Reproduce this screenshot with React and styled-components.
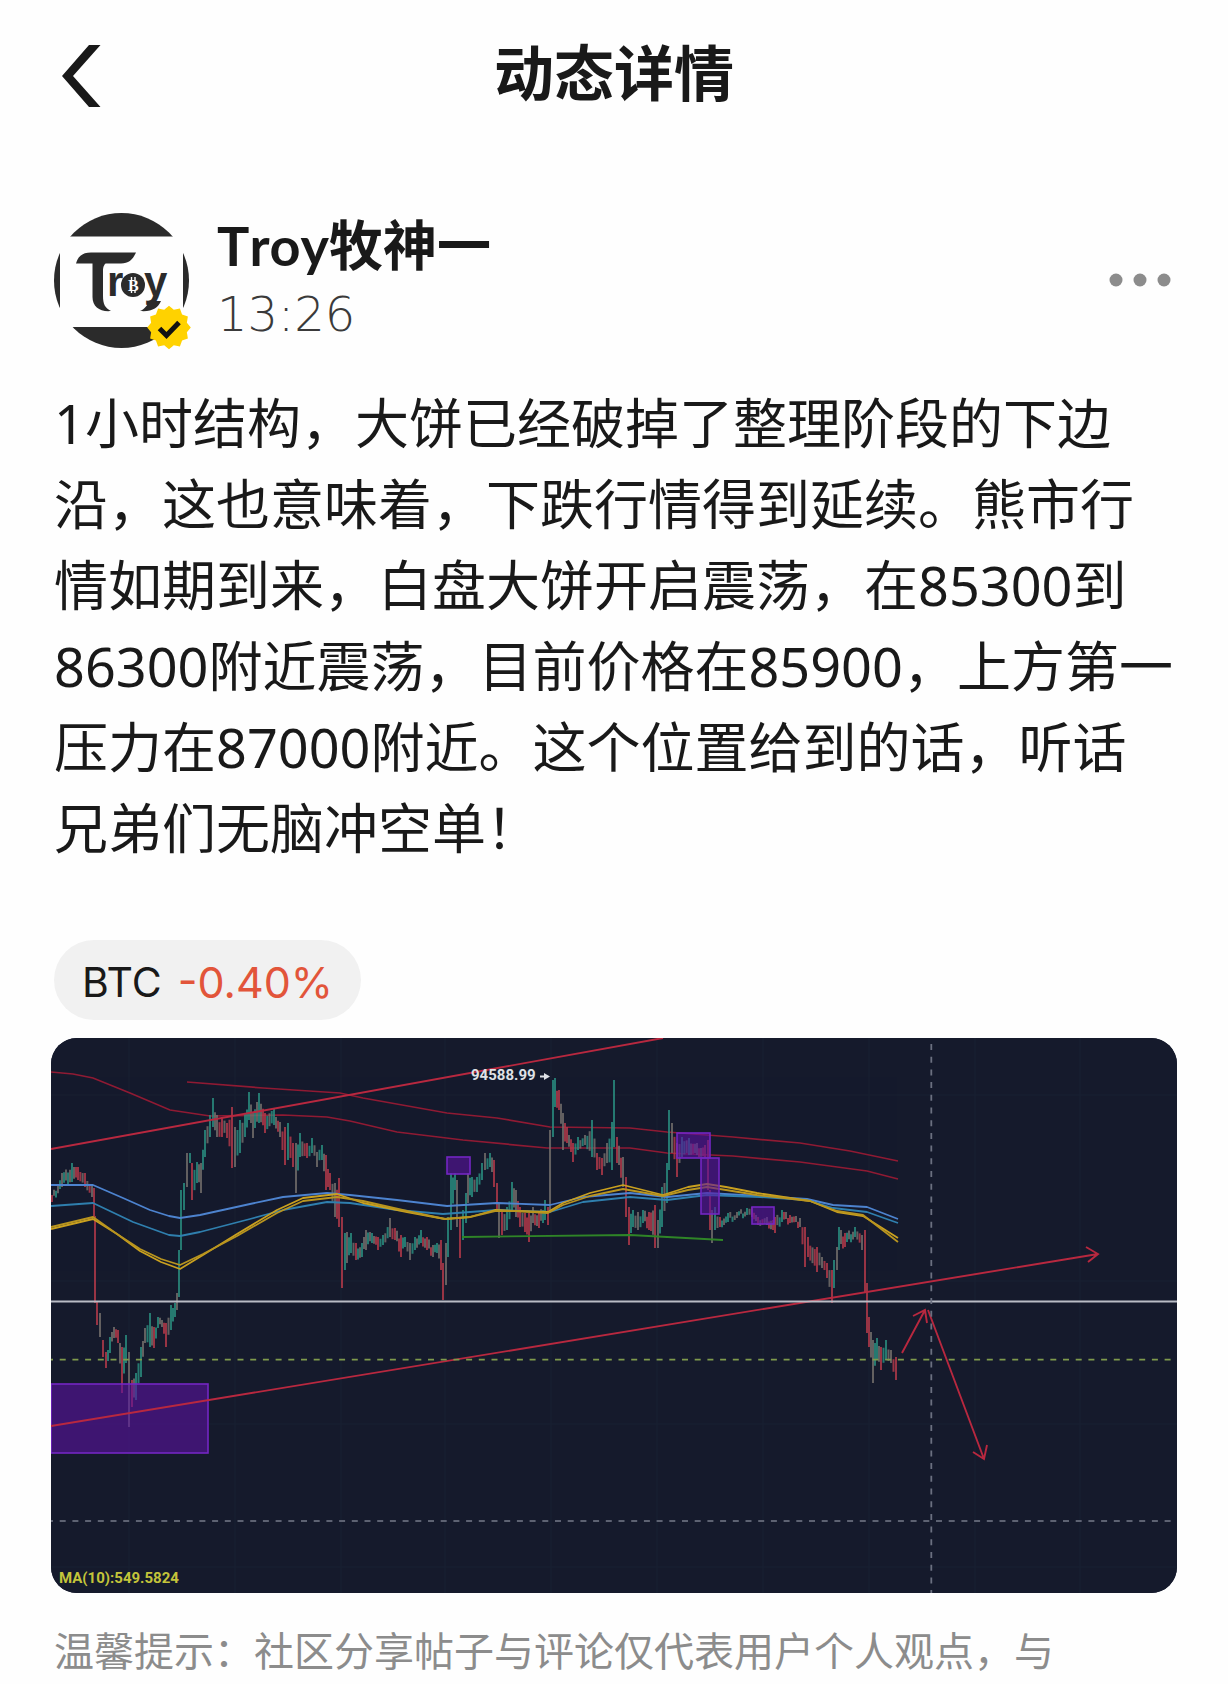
import React from "react";
import styled, { createGlobalStyle } from "styled-components";

const GlobalStyle = createGlobalStyle`
  * { box-sizing: border-box; }
  body {
    margin: 0;
    background: #fefefe;
    color: #191919;
    font-family: "Noto Sans", "Noto Sans CJK SC", sans-serif;
  }
`;

const Page = styled.div`
  display: flex;
  flex-direction: column;
`;

const Header = styled.header`
  display: grid;
  grid-template-columns: 1fr auto 1fr;
  align-items: center;
  height: 152px;
  padding: 0 54px;
`;

const Title = styled.h1`
  margin: 0;
  padding-bottom: 6px;
  font-size: 60px;
  line-height: 80px;
  font-weight: 700;
`;

const IconButton = styled.button`
  display: flex;
  align-items: center;
  justify-content: center;
  justify-self: start;
  padding: 0 ${(p) => p.$inset}px;
  border: 0;
  background: none;
  color: inherit;
  cursor: pointer;
`;

const Post = styled.main`
  display: flex;
  flex-direction: column;
  padding: 60px 54px 0;
`;

const Author = styled.section`
  display: flex;
  align-items: center;
  gap: 28px;
`;

const Avatar = styled.svg`
  flex: none;
  display: block;
  overflow: visible;
`;

const AuthorInfo = styled.div`
  flex: 1;
  display: flex;
  flex-direction: column;
  min-width: 0;
`;

const Name = styled.h2`
  margin: 0;
  font-family: Lato, "Noto Sans CJK SC", sans-serif;
  font-size: 54px;
  line-height: 68px;
  font-weight: 700;
  font-kerning: none;
`;

const Time = styled.time`
  font-family: "DejaVu Sans", sans-serif;
  font-size: 48px;
  line-height: 68px;
  font-weight: 200;
  color: #3a3a3a;
`;

const Body = styled.p`
  margin: 35px 0 0;
  font-size: 54px;
  line-height: 81px;
`;

const Ticker = styled.a`
  display: flex;
  align-items: center;
  align-self: flex-start;
  gap: 16px;
  height: 80px;
  margin-top: 71px;
  padding: 4px 28px 0;
  border-radius: 40px;
  background: #f1f1f1;
  color: #191919;
  font-family: Inter, sans-serif;
  font-size: 41px;
  line-height: 56px;
  text-decoration: none;
`;

const Change = styled.span`
  font-size: 43px;
  color: #e2553a;
`;

const Figure = styled.figure`
  margin: 18px -3px 0;
  border-radius: 26px;
  overflow: hidden;
  background: #151a2c;
`;

const ChartSvg = styled.svg`
  display: block;
  width: 100%;
  height: auto;
`;

const Tip = styled.p`
  margin: 30px 0 0;
  font-size: 40px;
  line-height: 56px;
  color: #8c8c8c;
`;

/* Each entry: x, high, low */
const PRICES = [
  [1,157,164],[11,135,149],[21,125,144],[27,129,142],[34,135,149],[41,147,159],[43,150,180],[44,178,265],
  [46,264,287],[49,275,299],[52,302,319],[55,314,330],[59,299,315],[63,289,300],[67,292,305],[71,309,355],
  [75,297,325],[78,314,389],[81,342,369],[85,335,362],[90,309,339],[94,290,305],[99,275,309],[103,289,310],
  [107,279,290],[111,282,289],[115,285,309],[120,267,292],[124,265,279],[126,255,272],[128,212,259],
  [130,152,212],[133,145,172],[136,115,149],[139,115,125],[141,125,162],[146,124,145],[150,125,155],
  [154,92,119],[159,77,99],[162,60,89],[166,77,99],[171,79,99],[176,85,100],[181,69,130],[184,89,129],
  [189,82,115],[194,75,99],[198,54,82],[202,75,100],[208,55,85],[214,75,95],[223,70,87],[229,84,99],
  [234,89,127],[237,85,122],[242,105,129],[245,105,155],[249,95,119],[256,105,120],[261,100,115],
  [266,114,129],[271,107,122],[275,117,152],[279,135,152],[284,145,179],[288,140,189],[291,179,250],
  [294,195,232],[296,194,225],[300,195,215],[305,205,222],[311,205,219],[315,192,212],[321,195,205],
  [327,199,212],[332,197,207],[339,180,199],[344,190,202],[350,197,219],[354,199,209],[359,205,222],
  [364,199,212],[370,192,205],[376,199,212],[382,207,219],[386,205,215],[390,202,232],[392,225,262],
  [395,205,247],[397,179,219],[400,135,192],[404,135,152],[406,142,189],[409,179,220],[412,172,202],
  [415,155,185],[417,135,165],[421,139,159],[426,139,154],[431,125,142],[434,115,132],[439,115,129],
  [443,122,149],[446,145,172],[448,165,200],[451,172,197],[456,169,192],[461,144,172],[465,152,179],
  [469,169,189],[474,175,194],[478,175,204],[482,169,185],[488,175,190],[494,162,182],[497,169,187],
  [499,92,175],[502,42,99],[504,40,69],[508,52,72],[512,75,112],[516,89,105],[522,105,124],[527,99,112],
  [534,97,107],[541,82,119],[546,115,132],[551,120,137],[556,105,125],[561,84,132],[563,42,109],
  [566,99,125],[572,119,149],[575,139,179],[578,169,207],[582,172,189],[587,174,192],[592,172,185],
  [598,174,192],[604,167,210],[607,182,210],[611,149,189],[616,125,165],[618,72,132],[621,85,115],
  [626,105,139],[631,99,119],[638,100,117],[646,105,117],[654,107,120],[657,102,152],[659,152,192],
  [661,172,205],[664,169,192],[669,179,189],[677,175,184],[686,174,180],[696,170,177],[701,169,179],
  [707,179,187],[716,179,187],[724,179,195],[731,172,184],[739,177,185],[749,180,189],[754,189,229],
  [757,199,219],[766,209,234],[771,219,230],[776,225,240],[781,232,265],[783,222,250],[786,209,232],
  [788,189,212],[794,195,209],[804,189,199],[811,197,212],[814,192,255],[816,245,295],[818,279,309],
  [822,302,345],[826,300,322],[830,309,332],[835,302,322],[840,312,325],[845,319,342],
];

/* Fill the space between the main bars with shorter ones */
function buildCandles(prices) {
  const out = [];
  prices.forEach((bar, i) => {
    const prev = prices[i - 1] || bar;
    const up = bar[1] + bar[2] < prev[1] + prev[2];
    const gap = bar[0] - prev[0];
    const steps = Math.max(1, Math.round(gap / 2.2));
    for (let s = 1; s < steps; s += 1) {
      const t = s / steps;
      const hi = prev[1] + (bar[1] - prev[1]) * t;
      const lo = prev[2] + (bar[2] - prev[2]) * t;
      const wave = ((i * 7 + s * 5) % 6) - 2;
      const inset = (lo - hi) * 0.15;
      out.push({ x: prev[0] + gap * t, hi: hi + inset + wave, lo: lo - inset + wave, tone: (i + s) % 2 === 0 ? "mix" : up ? "up" : "down" });
    }
    out.push({ x: bar[0], hi: bar[1], lo: bar[2], tone: i % 4 === 1 ? "mix" : up ? "up" : "down" });
  });
  return out;
}

const CANDLES = buildCandles(PRICES);
const TONES = { up: "#2a8f80", down: "#b53a4a", mix: "#75706c" };

const AVERAGES = [
  { color: "#8f1b34", points: "136,44 212,50 289,55 312,60 396,75 446,80 499,89 579,90 616,94 682,99 749,105 799,113 847,123" },
  { color: "#8f1b34", points: "0,34 22,36 42,40 79,55 119,72 159,78 232,77 276,79 299,83 346,94 412,102 496,110 579,110 616,115 682,118 749,124 816,133 847,141" },
  { color: "#4d83cf", points: "0,147 42,147 72,160 99,172 118,178 129,180 149,177 199,166 232,159 276,155 299,157 346,162 396,168 446,165 499,167 532,159 579,155 616,159 656,155 709,158 756,161 782,167 816,169 847,181" },
  { color: "#2f7fae", points: "0,168 42,165 82,184 118,197 129,198 149,194 199,181 232,172 276,164 299,165 346,172 392,176 446,172 499,174 532,164 579,159 616,162 656,157 709,159 756,162 782,170 816,174 847,185" },
  { color: "#c9a01f", points: "0,191 42,181 66,196 89,213 110,224 129,231 152,217 186,196 226,172 252,160 286,156 312,165 356,174 394,181 419,179 444,172 465,173 497,174 512,165 539,155 572,147 612,157 637,149 656,146 675,149 706,155 759,163 786,174 812,178 847,200" },
  { color: "#b8941f", points: "0,189 42,179 66,196 89,211 110,221 129,227 152,216 186,198 226,175 252,163 286,159 312,163 356,173 394,181 419,179 444,173 465,173 497,175 512,167 539,158 572,151 612,158 637,152 656,149 675,152 706,157 759,163 786,173 812,177 847,204" },
];

const ZONES = [
  [0, 346, 157, 69],
  [396, 119, 23, 17],
  [626, 95, 33, 25],
  [650, 120, 18, 56],
  [701, 169, 22, 17],
];

const GRID_X = [78, 184, 290, 394, 500, 606, 712, 818, 924, 1029];
const GRID_Y = [57, 243, 386, 529];

function Chart() {
  return (
    <ChartSvg viewBox="0 0 1126 555" role="img" aria-label="BTC">
      <rect width="1126" height="555" fill="#151a2c" />
      <g stroke="#192032">
        {GRID_X.map((x) => <line key={x} x1={x} x2={x} y1="0" y2="555" />)}
        {GRID_Y.map((y) => <line key={y} x1="0" x2="1126" y1={y} y2={y} />)}
      </g>
      <g fill="none" strokeWidth="1.7">
        {AVERAGES.slice(0, 2).map((a) => <polyline key={a.points} points={a.points} stroke={a.color} />)}
      </g>
      <g strokeWidth="2" opacity="0.82">
        {CANDLES.map((c, i) => <line key={i} x1={c.x} x2={c.x} y1={c.hi} y2={c.lo} stroke={TONES[c.tone]} />)}
      </g>
      <g fill="none" strokeWidth="1.8" strokeLinejoin="round">
        {AVERAGES.slice(2).map((a) => <polyline key={a.points} points={a.points} stroke={a.color} />)}
      </g>
      <polyline points="411,199 579,197 672,202" fill="none" stroke="#2f8527" strokeWidth="1.8" />
      <g fill="#5a12a0" fillOpacity="0.6" stroke="#7426c4" strokeWidth="1.6">
        {ZONES.map(([x, y, w, h]) => <rect key={x} x={x} y={y} width={w} height={h} />)}
      </g>
      <g fill="none" stroke="#b8283f" strokeWidth="1.9">
        <path d="M0 111 612 0" />
        <path d="M0 388 1047 216M1035 209 1047 216 1037 224" />
        <path d="M851 315 874 272M862 278 874 272 876 285" />
        <path d="M877 272 933 421M922 414 933 421 936 407" />
      </g>
      <line x1="0" x2="1126" y1="263.5" y2="263.5" stroke="#b9bcc5" strokeWidth="1.8" />
      <line x1="-4" x2="1126" y1="321.7" y2="321.7" stroke="#7f9a4c" strokeWidth="1.7" strokeDasharray="6 6.7" />
      <line x1="-4" x2="1126" y1="483" y2="483" stroke="#5d6272" strokeWidth="1.8" strokeDasharray="6 6.7" />
      <line x1="880.3" x2="880.3" y1="6" y2="555" stroke="#6b7080" strokeWidth="1.8" strokeDasharray="6 6.7" />
      <g fontFamily="Roboto, sans-serif" fontSize="15" fontWeight="700">
        <text x="420" y="42" fill="#dfe1e6">94588.99</text>
        <text x="8" y="545" fill="#c4c43a">MA(10):549.5824</text>
      </g>
      <path d="M489 38.5h5" stroke="#dfe1e6" strokeWidth="1.8" />
      <path d="M493 35 499 38.5 493 42z" fill="#dfe1e6" />
    </ChartSvg>
  );
}

const BADGE_POINTS = Array.from({ length: 24 }, (_, i) => {
  const r = i % 2 ? 18.5 : 21.8;
  const a = (Math.PI * i) / 12 - Math.PI / 2;
  return `${(115 + r * Math.cos(a)).toFixed(2)},${(114.5 + r * Math.sin(a)).toFixed(2)}`;
}).join(" ");

function AuthorAvatar() {
  return (
    <Avatar width="135" height="135" viewBox="0 0 135 135" role="img" aria-label="Troy">
      <circle cx="67.5" cy="67.5" r="67.5" fill="#2b2b2b" />
      <rect x="6" y="23.5" width="123" height="90.5" fill="#fefefe" />
      <g fill="#2b2b2b" fontFamily="Liberation Sans, sans-serif" fontWeight="700">
        <text x="33" y="66" fontSize="36">T</text>
        <text x="53" y="83" fontSize="42">r</text>
        <text x="90" y="83" fontSize="42">y</text>
      </g>
      <path d="M22 50.5C24 43 29 39.5 37 39.5H82C79 46 75 50.5 67 50.5Z" fill="#2b2b2b" />
      <path d="M38.5 48H54C50 51 49 54 49 58V83C49 91 51 95 57 98C46 99 38.5 94 38.5 84Z" fill="#2b2b2b" />
      <path d="M86 98C91 96 93 92 96 88H107C104 95 98 99 86 98Z" fill="#2b2b2b" />
      <circle cx="79" cy="72" r="12" fill="#2b2b2b" />
      <path d="M77.5 64V67M81 64V67M77.5 77V80M81 77V80" stroke="#fefefe" strokeWidth="1.4" />
      <text x="74" y="77.5" fontSize="16" fontFamily="Liberation Serif, serif" fontWeight="700" fill="#fefefe">B</text>
      <polygon points={BADGE_POINTS} fill="#ffd200" />
      <path d="M105.5 115.5 112.5 122.5 125 109.5" fill="none" stroke="#111" strokeWidth="5" />
    </Avatar>
  );
}

export default function App() {
  return (
    <Page>
      <GlobalStyle />
      <Header>
        <IconButton type="button" aria-label="返回" $inset={8}>
          <svg width="39" height="62" viewBox="0 0 39 62" fill="#191919">
            <path d="M27 0H38.5L11 31 38.5 62H27L0 31Z" />
          </svg>
        </IconButton>
        <Title>动态详情</Title>
      </Header>
      <Post>
        <Author>
          <AuthorAvatar />
          <AuthorInfo>
            <Name>Troy牧神一</Name>
            <Time>13:26</Time>
          </AuthorInfo>
          <IconButton type="button" aria-label="更多" $inset={3}>
            <svg width="62" height="14" viewBox="0 0 62 14" fill="#8c8c8c">
              <circle cx="7" cy="7" r="6.5" />
              <circle cx="31" cy="7" r="6.5" />
              <circle cx="55" cy="7" r="6.5" />
            </svg>
          </IconButton>
        </Author>
        <Body>
          1小时结构，大饼已经破掉了整理阶段的下边沿，这也意味着，下跌行情得到延续。熊市行情如期到来，白盘大饼开启震荡，在85300到86300附近震荡，目前价格在85900，上方第一压力在87000附近。这个位置给到的话，听话兄弟们无脑冲空单！
        </Body>
        <Ticker href="#btc">
          <span>BTC</span>
          <Change>-0.40%</Change>
        </Ticker>
        <Figure>
          <Chart />
        </Figure>
        <Tip>温馨提示：社区分享帖子与评论仅代表用户个人观点，与</Tip>
      </Post>
    </Page>
  );
}
